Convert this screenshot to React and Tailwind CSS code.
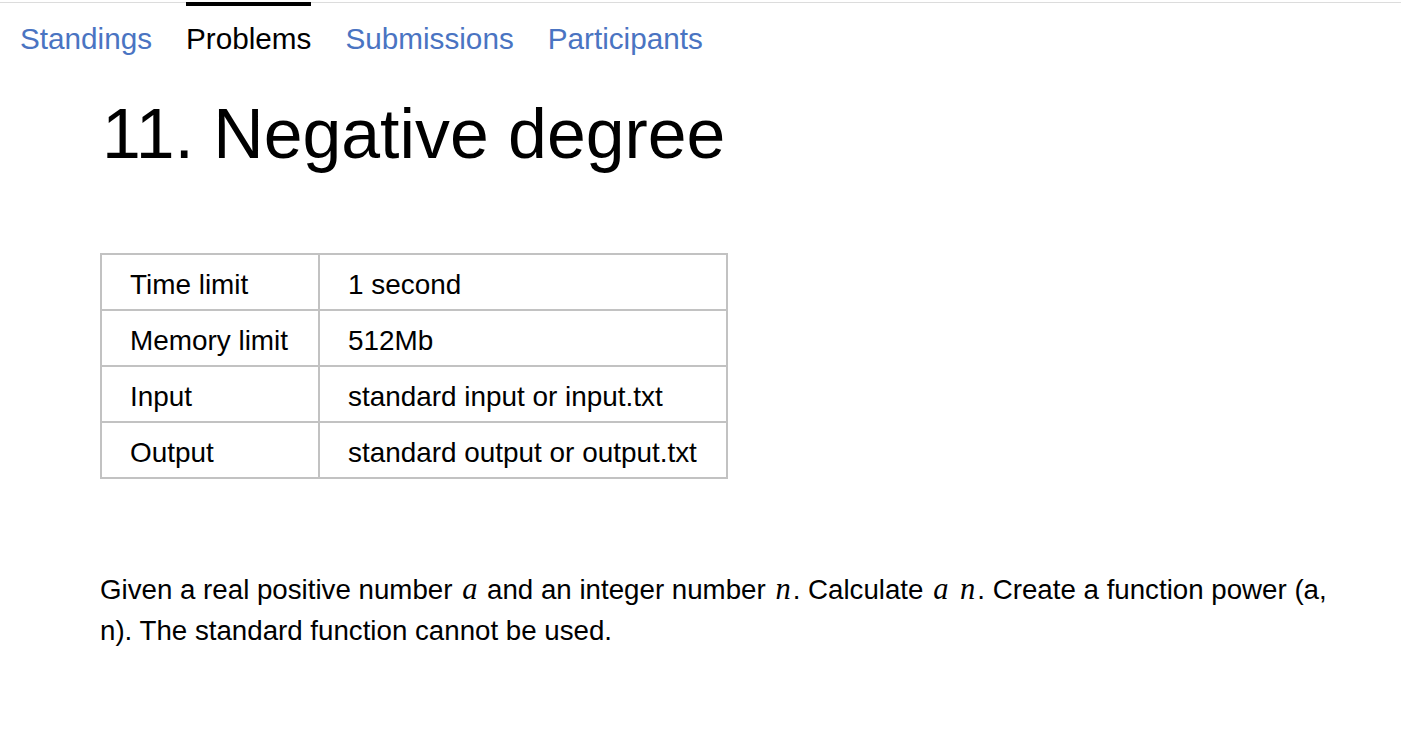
import React from 'react'

const tabs = [
  { label: 'Standings', active: false },
  { label: 'Problems', active: true },
  { label: 'Submissions', active: false },
  { label: 'Participants', active: false },
]

const limits = [
  ['Time limit', '1 second'],
  ['Memory limit', '512Mb'],
  ['Input', 'standard input or input.txt'],
  ['Output', 'standard output or output.txt'],
]

function Var({ children }) {
  return <i className="mx-[2px] font-['Liberation_Serif',serif] text-[30.5px]">{children}</i>
}

export default function App() {
  return (
    <div className="min-h-screen bg-white pt-[2px] font-['Liberation_Sans',Arial,sans-serif] text-black">
      <nav className="flex gap-[34px] border-t border-[#dcdcdc] pl-5">
        {tabs.map((t) => (
          <a
            key={t.label}
            href="#"
            className={`-mt-px border-t-4 pt-[16px] text-[29.7px] leading-[34px] ${t.active ? 'border-black text-black' : 'border-transparent text-[#4a74c2]'}`}
          >
            {t.label}
          </a>
        ))}
      </nav>

      <main className="pl-[100px] pr-[40px]">
        <h1 className="mt-[38px] ml-[2px] text-[69.8px] leading-[80px]">11. Negative degree</h1>

        <table className="mt-[79px] border-collapse text-[27.9px] leading-[32px]">
          <tbody>
            {limits.map(([k, v]) => (
              <tr key={k} className="h-[56px]">
                <td className="w-[218px] border-2 border-[#c2c2c2] pl-[28px] pr-3 pt-[5px]">{k}</td>
                <td className="w-[408px] border-2 border-[#c2c2c2] pl-[28px] pr-3 pt-[5px]">{v}</td>
              </tr>
            ))}
          </tbody>
        </table>

        <p className="mt-[90px] text-[27.7px] leading-[41px]">
          Given a real positive number <Var>a</Var> and an integer number <Var>n</Var>. Calculate{' '}
          <Var>a</Var> <Var>n</Var>. Create a function power (a, n). The standard function cannot be used.
        </p>

        <h2 className="mt-[90px] text-[48px] font-bold leading-[56px]">Input format</h2>
      </main>
    </div>
  )
}
